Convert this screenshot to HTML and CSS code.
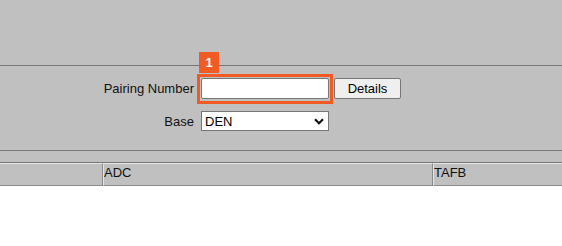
FILE: index.html
```html
<!DOCTYPE html>
<html>
<head>
<meta charset="utf-8">
<link rel="stylesheet" href="styles.css">
</head>
<body>
<div class="page">
  <div class="top"></div>
  <div class="form">
    <div class="form-grid">
      <label class="lbl" for="pn">Pairing Number</label>
      <div class="ctrl">
        <div class="field-wrap">
          <input id="pn" class="text-input" type="text">
          <div class="highlight"><span class="badge">1</span></div>
        </div>
        <button class="btn">Details</button>
      </div>
      <label class="lbl" for="base">Base</label>
      <div class="ctrl">
        <div class="select-wrap">
          <select id="base" class="select"><option>DEN</option></select>
          <svg class="chev" width="10" height="7" viewBox="0 0 10 7"><path d="M1 1.2 L5 5.2 L9 1.2" fill="none" stroke="#111" stroke-width="2.2"/></svg>
        </div>
      </div>
    </div>
  </div>
  <div class="spacer"></div>
  <div class="thead">
    <div class="th th-first"></div>
    <div class="th th-adc">ADC</div>
    <div class="th th-tafb">TAFB</div>
  </div>
</div>
</body>
</html>
```
FILE: styles.css
```css
html, body {
  margin: 0;
  padding: 0;
  background: #ffffff;
}
body {
  font-family: Arial, "Liberation Sans", sans-serif;
  font-size: 13px;
  color: #000;
}
.page {
  width: 562px;
  background: #ffffff;
}
.top {
  height: 65px;
  background: #c0c0c0;
  border-bottom: 1px solid #777777;
}
.form {
  height: 84px;
  background: #c0c0c0;
  border-bottom: 1px solid #777777;
  padding-top: 12px;
  box-sizing: border-box;
  height: 85px;
}
.form-grid {
  display: grid;
  grid-template-columns: 194px auto;
  column-gap: 7px;
  row-gap: 12px;
  align-items: center;
}
.lbl {
  text-align: right;
  color: #111;
  font-size: 13px;
}
.ctrl {
  display: flex;
  align-items: center;
  gap: 5px;
}
.field-wrap {
  position: relative;
  width: 128px;
  height: 21px;
}
.text-input {
  width: 128px;
  height: 21px;
  box-sizing: border-box;
  border: 1px solid #767676;
  border-radius: 2px;
  background: #fff;
  padding: 1px 2px;
  margin: 0;
  font: 13px Arial, "Liberation Sans", sans-serif;
  display: block;
}
.highlight {
  position: absolute;
  left: -4px;
  top: -4px;
  width: 136px;
  height: 30px;
  box-sizing: border-box;
  border: 3px solid #f15a24;
}
.badge {
  position: absolute;
  left: -1px;
  top: -25px;
  width: 20px;
  height: 21px;
  background: #f15a24;
  color: #fff;
  font-weight: bold;
  font-size: 13px;
  line-height: 21px;
  text-align: center;
}
.btn {
  width: 67px;
  height: 21px;
  box-sizing: border-box;
  border: 1px solid #767676;
  border-radius: 2px;
  background: #efefef;
  font: 13px Arial, "Liberation Sans", sans-serif;
  color: #000;
  padding: 0;
  margin: 0;
}
.select-wrap {
  position: relative;
  width: 128px;
  height: 20px;
}
.select {
  appearance: none;
  -webkit-appearance: none;
  width: 128px;
  height: 20px;
  box-sizing: border-box;
  border: 1px solid #767676;
  border-radius: 0;
  background: #fff;
  font: 13px Arial, "Liberation Sans", sans-serif;
  color: #000;
  padding: 0 0 0 3px;
  margin: 0;
  display: block;
}
.chev {
  position: absolute;
  right: 5px;
  top: 7px;
  pointer-events: none;
}
.spacer {
  height: 11px;
  background: #c0c0c0;
  border-bottom: 1px solid #777777;
}
.thead {
  display: flex;
  background: #c0c0c0;
}
.th {
  height: 23px;
  box-sizing: border-box;
  border-top: 1px solid #e6e6e6;
  border-left: 1px solid #e6e6e6;
  border-right: 1px solid #8a8a8a;
  border-bottom: 1px solid #8a8a8a;
  padding: 1px 0 0 0;
  font-size: 13px;
  line-height: 15px;
  color: #111;
}
.th-first {
  width: 103px;
  border-left: none;
}
.th-adc {
  width: 330px;
}
.th-tafb {
  flex: 1;
  border-right: none;
}
```
